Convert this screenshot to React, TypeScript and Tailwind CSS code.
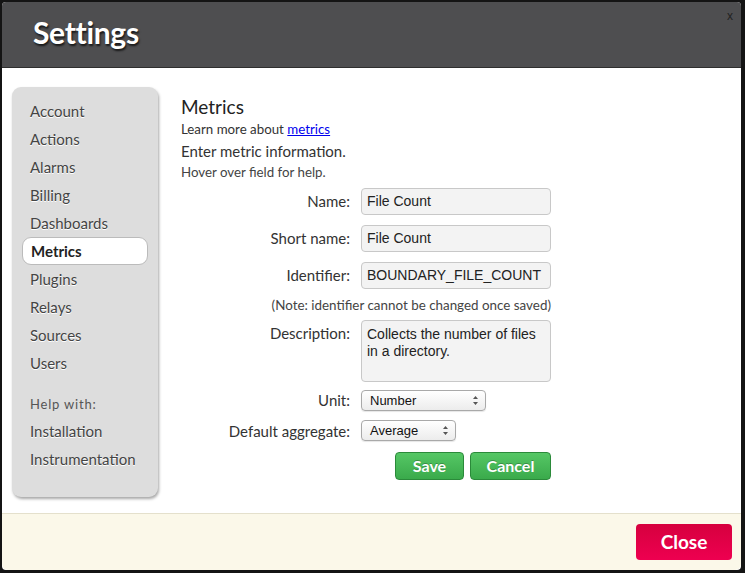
import { ReactNode } from "react";

const NAV = ["Account", "Actions", "Alarms", "Billing", "Dashboards", "Metrics", "Plugins", "Relays", "Sources", "Users"];
const HELP = ["Installation", "Instrumentation"];

function Row({ label, children, top = false }: { label: string; children: ReactNode; top?: boolean }) {
  return (
    <div className={`flex ${top ? "items-start" : "items-center"}`}>
      <label className={`w-[180px] pr-[11px] text-right text-[15px] text-[#333] ${top ? "pt-[2px]" : ""}`}>{label}</label>
      {children}
    </div>
  );
}

function Select({ value, width }: { value: string; width: string }) {
  return (
    <div
      className={`${width} h-[21px] flex items-center justify-between pl-[8px] pr-[6px] rounded-[4px] border border-[#a9a9a9] bg-gradient-to-b from-white to-[#ececec] shadow-[0_1px_1px_rgba(0,0,0,0.1)] text-[13px] text-[#111] font-['Liberation_Sans',sans-serif]`}
    >
      <span>{value}</span>
      <svg width="7" height="11" viewBox="0 0 7 11">
        <path d="M1 4 L3.5 1 L6 4 Z M1 7 L3.5 10 L6 7 Z" fill="#555" />
      </svg>
    </div>
  );
}

const field =
  "w-[190px] rounded-[4px] border border-[#c8c8c8] bg-[#f3f3f3] px-[5px] text-[14px] text-[#222] font-['Liberation_Sans',sans-serif]";

export default function App() {
  return (
    <div className="w-[745px] h-[573px] bg-[#141414] p-[2px] pr-[4px] pb-[3px] font-['Lato',sans-serif]">
      <div className="h-full flex flex-col rounded-[4px] overflow-hidden bg-white">
        <div className="relative h-[66px] bg-[#4e4e50] flex items-center pl-[31px] border-b border-[#2e2e2e]">
          <h1 className="text-[30px] font-bold text-white tracking-[-0.3px] [text-shadow:1px_2px_2px_rgba(0,0,0,0.7)] pb-[4px]">Settings</h1>
          <span className="absolute right-[8px] top-[5px] text-[12px] text-[#222] font-['Liberation_Sans',sans-serif]">x</span>
        </div>

        <div className="flex-1 flex pt-[19px] pl-[10px]">
          <div className="w-[146px] h-[410px] rounded-[9px] bg-[#dddddd] shadow-[1px_2px_3px_rgba(0,0,0,0.35)] pt-[10px] pb-[10px]">
            <ul className="flex flex-col">
              {NAV.map((n) =>
                n === "Metrics" ? (
                  <li
                    key={n}
                    className="mx-[10px] h-[28px] flex items-center pl-[8px] bg-white rounded-[9px] border border-[#bbb] text-[15px] font-bold text-[#222]"
                  >
                    {n}
                  </li>
                ) : (
                  <li key={n} className="h-[28px] flex items-center pl-[18px] text-[15px] text-[#444] [text-shadow:0_1px_0_#fff]">
                    {n}
                  </li>
                )
              )}
            </ul>
            <div className="mt-[16px] pl-[18px] text-[13px] tracking-[0.8px] text-[#555] h-[24px] flex items-center">Help with:</div>
            <ul className="flex flex-col">
              {HELP.map((n) => (
                <li key={n} className="h-[28px] flex items-center pl-[18px] text-[15px] text-[#444] [text-shadow:0_1px_0_#fff]">
                  {n}
                </li>
              ))}
            </ul>
          </div>

          <div className="ml-[23px] pt-[7px] w-[370px]">
            <h2 className="text-[19px] text-[#222] leading-[26px]">Metrics</h2>
            <p className="text-[13.3px] text-[#333] leading-[18px]">
              Learn more about <a className="text-[#0000ee] underline">metrics</a>
            </p>
            <p className="text-[15px] text-[#333] leading-[22px] mt-[2px]">Enter metric information.</p>
            <p className="text-[13.3px] text-[#444] leading-[20px]">Hover over field for help.</p>

            <div className="mt-[6px] flex flex-col gap-[10px]">
              <Row label="Name:">
                <div className={`${field} h-[27px] flex items-center`}>File Count</div>
              </Row>
              <Row label="Short name:">
                <div className={`${field} h-[27px] flex items-center`}>File Count</div>
              </Row>
              <Row label="Identifier:">
                <div className={`${field} h-[27px] flex items-center`}>BOUNDARY_FILE_COUNT</div>
              </Row>
            </div>
            <p className="mt-[8px] w-[370px] text-right text-[13.4px] leading-[17px] text-[#444]">(Note: identifier cannot be changed once saved)</p>
            <div className="mt-[6px]">
              <Row label="Description:" top>
                <div className={`${field} h-[62px] pt-[5px] leading-[17px]`}>Collects the number of files in a directory.</div>
              </Row>
            </div>
            <div className="mt-[7px] flex flex-col gap-[8px]">
              <Row label="Unit:">
                <Select value="Number" width="w-[125px]" />
              </Row>
              <Row label="Default aggregate:">
                <Select value="Average" width="w-[95px]" />
              </Row>
            </div>
            <div className="mt-[10px] flex justify-end gap-[6px]">
              <button className="w-[69px] h-[28px] rounded-[4px] border border-[#2b8a3a] bg-gradient-to-b from-[#55c765] to-[#3aaa4b] text-white text-[16px] font-bold [text-shadow:0_-1px_0_rgba(0,0,0,0.25)]">
                Save
              </button>
              <button className="w-[81px] h-[28px] rounded-[4px] border border-[#2b8a3a] bg-gradient-to-b from-[#55c765] to-[#3aaa4b] text-white text-[16px] font-bold [text-shadow:0_-1px_0_rgba(0,0,0,0.25)]">
                Cancel
              </button>
            </div>
          </div>
        </div>

        <div className="h-[57px] bg-[#fbf8e9] border-t border-[#e4e0cc] rounded-b-[6px] flex items-center justify-end pr-[9px]">
          <button className="w-[96px] h-[36px] rounded-[4px] bg-gradient-to-b from-[#d6003e] to-[#ee0050] text-white text-[19px] font-bold">
            Close
          </button>
        </div>
      </div>
    </div>
  );
}
